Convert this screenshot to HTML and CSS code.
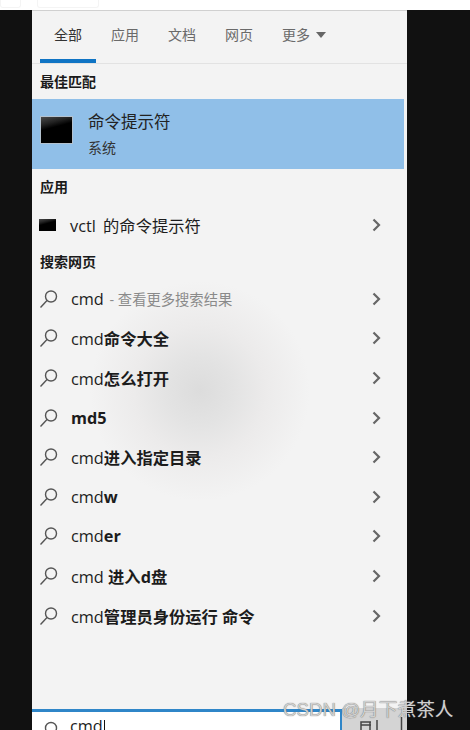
FILE: index.html
```html
<!DOCTYPE html>
<html lang="zh-CN">
  <head>
    <meta charset="UTF-8" />
    <title>cmd</title>
    <link rel="stylesheet" href="styles.css">
  </head>
  <body>
    <div class="topstrip">
      <div class="ghost ghost-a"></div>
      <div class="ghost ghost-b"></div>
    </div>
    <div class="panel">
      <div class="tabs">
        <span class="tab active">全部</span>
        <span class="tab">应用</span>
        <span class="tab">文档</span>
        <span class="tab">网页</span>
        <span class="tab">更多<i class="caret"></i></span>
      </div>

      <h2 class="label label-first">最佳匹配</h2>
      <div class="best">
        <div class="cmd-icon"></div>
        <div>
          <div class="best-title">命令提示符</div>
          <div class="best-sub">系统</div>
        </div>
      </div>

      <h2 class="label label-app">应用</h2>
      <div class="row row-app">
        <div class="cmd-icon small"></div>
        <span class="text">vctl 的命令提示符</span>
        <svg class="arrow" width="9" height="14" viewBox="0 0 9 14"><path d="M1.5 1.5 7 7l-5.500 5.500" /></svg>
      </div>

      <h2 class="label label-web">搜索网页</h2>
      <div class="results">
        <div class="row">
          <svg class="search" width="20" height="20" viewBox="0 0 20 20"><circle cx="12" cy="7.500" r="5.500" /><path d="M8 11.500 1.500 18.500" /></svg>
          <span class="text">cmd<span class="hint"> - 查看更多搜索结果</span></span>
          <svg class="arrow" width="9" height="14" viewBox="0 0 9 14"><path d="M1.5 1.5 7 7l-5.500 5.500" /></svg>
        </div>
        <div class="row">
          <svg class="search" width="20" height="20" viewBox="0 0 20 20"><circle cx="12" cy="7.500" r="5.500" /><path d="M8 11.500 1.500 18.500" /></svg>
          <span class="text">cmd<b>命令大全</b></span>
          <svg class="arrow" width="9" height="14" viewBox="0 0 9 14"><path d="M1.5 1.5 7 7l-5.500 5.500" /></svg>
        </div>
        <div class="row">
          <svg class="search" width="20" height="20" viewBox="0 0 20 20"><circle cx="12" cy="7.500" r="5.500" /><path d="M8 11.500 1.500 18.500" /></svg>
          <span class="text">cmd<b>怎么打开</b></span>
          <svg class="arrow" width="9" height="14" viewBox="0 0 9 14"><path d="M1.5 1.5 7 7l-5.500 5.500" /></svg>
        </div>
        <div class="row">
          <svg class="search" width="20" height="20" viewBox="0 0 20 20"><circle cx="12" cy="7.500" r="5.500" /><path d="M8 11.500 1.500 18.500" /></svg>
          <span class="text"><b>md5</b></span>
          <svg class="arrow" width="9" height="14" viewBox="0 0 9 14"><path d="M1.5 1.5 7 7l-5.500 5.500" /></svg>
        </div>
        <div class="row">
          <svg class="search" width="20" height="20" viewBox="0 0 20 20"><circle cx="12" cy="7.500" r="5.500" /><path d="M8 11.500 1.500 18.500" /></svg>
          <span class="text">cmd<b>进入指定目录</b></span>
          <svg class="arrow" width="9" height="14" viewBox="0 0 9 14"><path d="M1.5 1.5 7 7l-5.500 5.500" /></svg>
        </div>
        <div class="row">
          <svg class="search" width="20" height="20" viewBox="0 0 20 20"><circle cx="12" cy="7.500" r="5.500" /><path d="M8 11.500 1.500 18.500" /></svg>
          <span class="text">cmd<b>w</b></span>
          <svg class="arrow" width="9" height="14" viewBox="0 0 9 14"><path d="M1.5 1.5 7 7l-5.500 5.500" /></svg>
        </div>
        <div class="row">
          <svg class="search" width="20" height="20" viewBox="0 0 20 20"><circle cx="12" cy="7.500" r="5.500" /><path d="M8 11.500 1.500 18.500" /></svg>
          <span class="text">cmd<b>er</b></span>
          <svg class="arrow" width="9" height="14" viewBox="0 0 9 14"><path d="M1.5 1.5 7 7l-5.500 5.500" /></svg>
        </div>
        <div class="row">
          <svg class="search" width="20" height="20" viewBox="0 0 20 20"><circle cx="12" cy="7.500" r="5.500" /><path d="M8 11.500 1.500 18.500" /></svg>
          <span class="text">cmd <b>进入d盘</b></span>
          <svg class="arrow" width="9" height="14" viewBox="0 0 9 14"><path d="M1.5 1.5 7 7l-5.500 5.500" /></svg>
        </div>
        <div class="row">
          <svg class="search" width="20" height="20" viewBox="0 0 20 20"><circle cx="12" cy="7.500" r="5.500" /><path d="M8 11.500 1.500 18.500" /></svg>
          <span class="text">cmd<b>管理员身份运行 命令</b></span>
          <svg class="arrow" width="9" height="14" viewBox="0 0 9 14"><path d="M1.5 1.5 7 7l-5.500 5.500" /></svg>
        </div>
      </div>

      <div class="searchbar">
        <div class="input">
          <svg class="input-icon" width="14" height="14" viewBox="0 0 14 14"><circle cx="7" cy="7" r="5.500" /></svg>
          <span class="typed">cmd</span>
        </div>
        <div class="side">
          <svg width="65" height="22" viewBox="0 0 65 22"><path d="M19 22V14h10M19 17h10M28 14v8M35 12v10M59.500 9v13" /></svg>
        </div>
      </div>
    </div>
    <div class="watermark">CSDN @月下煮茶人</div>
  </body>
</html>
```

FILE: styles.css
```css
html,
body {
  margin: 0;
  height: 730px;
  overflow: hidden;
}
body {
  background: #111111;
  font-family: "Open Sans", "Noto Sans CJK SC", sans-serif;
  color: #1c1c1c;
}
.topstrip {
  height: 10px;
  background: #ffffff;
  display: flex;
  gap: 16px;
}
.ghost {
  height: 7px;
  border: 1px solid #f4f4f4;
  border-top: 0;
  border-radius: 0 0 3px 3px;
}
.ghost-a {
  width: 19px;
}
.ghost-b {
  width: 60px;
}
.panel {
  box-sizing: border-box;
  width: 375px;
  height: 720px;
  margin-left: 32px;
  border-top: 1px solid #d0d0d0;
  background: radial-gradient(circle 110px at 168px 380px, #dcdcdc 0, #e3e3e3 30%, #ecebeb 60%, #f3f3f3 100%) #f3f3f3;
  display: flex;
  flex-direction: column;
  overflow: hidden;
}

.tabs {
  display: flex;
  gap: 29px;
  height: 52px;
  padding-left: 22px;
  border-bottom: 1px solid #e2e2e2;
  flex-shrink: 0;
}
.tab {
  font-size: 14px;
  line-height: 47px;
  color: #6a6a6a;
  position: relative;
}
.tab.active {
  color: #333333;
}
.tab.active::after {
  content: "";
  position: absolute;
  left: -14px;
  right: -14px;
  bottom: 0;
  height: 4px;
  background: #0f74c4;
}
.caret {
  display: inline-block;
  margin-left: 6px;
  vertical-align: 2px;
  border-left: 5.500px solid transparent;
  border-right: 5.500px solid transparent;
  border-top: 6px solid #666666;
}

.label {
  margin: 0;
  padding-left: 8px;
  font-size: 14px;
  font-weight: 700;
  line-height: 20px;
  color: #1a1a1a;
}
.label-first {
  margin-top: 8px;
  margin-bottom: 7px;
}
.label-app {
  margin-top: 8px;
}
.label-web {
  margin-top: 8px;
  margin-bottom: 7px;
}

.best {
  height: 70px;
  width: 372px;
  background: #90bfe8;
  display: flex;
  align-items: center;
  gap: 15px;
  padding-left: 8px;
  box-sizing: border-box;
  flex-shrink: 0;
}
.cmd-icon {
  width: 33px;
  height: 28px;
  margin-bottom: 8px;
  border: 1px solid #b4c2cf;
  box-sizing: border-box;
  background: linear-gradient(165deg, #4a4a4a 0, #222222 24%, #000000 40%);
}
.cmd-icon.small {
  width: 17px;
  height: 12px;
  margin-bottom: 0;
  border: 0;
}
.best-title {
  font-size: 16.500px;
  line-height: 24px;
  color: #222222;
}
.best-sub {
  font-size: 14px;
  line-height: 20px;
  margin-top: 4px;
  color: #333333;
}

.row {
  height: 39.600px;
  display: flex;
  align-items: center;
  padding-left: 7px;
  width: 349px;
  box-sizing: border-box;
}
.row-app {
  height: 38px;
  margin-top: 9px;
}
.row-app .text {
  margin-left: 14px;
  word-spacing: 3px;
}
.text {
  font-size: 16.300px;
  margin-left: 12px;
  flex: 1;
  white-space: nowrap;
}
.text b {
  font-weight: 700;
}
.hint {
  font-size: 14.300px;
  margin-left: 2px;
  color: #8a8a8a;
}
.search {
  fill: none;
  stroke: #555555;
  stroke-width: 1.400;
}
.arrow {
  fill: none;
  stroke: #666666;
  stroke-width: 2.200;
}

.searchbar {
  margin-top: auto;
  height: 22px;
  display: flex;
  flex-shrink: 0;
}
.input {
  width: 296px;
  margin-top: 1px;
  background: #ffffff;
  border-top: 3px solid #2f86c8;
  border-right: 2px solid #2f86c8;
  display: flex;
  align-items: flex-start;
  padding-left: 12px;
  flex-shrink: 0;
  overflow: hidden;
}
.input-icon {
  fill: none;
  stroke: #555555;
  stroke-width: 1.400;
  margin-top: 9px;
  flex-shrink: 0;
}
.typed {
  margin-left: 12px;
  font-size: 16.300px;
  line-height: 28px;
}
.typed::after {
  content: "";
  display: inline-block;
  width: 1px;
  height: 12px;
  margin-left: 1px;
  background: #111111;
}
.side {
  flex: 1;
  background: #d4d4d4;
}
.side svg {
  display: block;
  fill: none;
  stroke: #444444;
  stroke-width: 1.500;
}

.watermark {
  position: absolute;
  left: 283px;
  top: 698px;
  font-family: "Liberation Sans", "Noto Sans CJK SC", sans-serif;
  font-size: 18.700px;
  line-height: 24px;
  color: #d0d0d0;
  text-shadow: 0 0 1px #555555;
  white-space: nowrap;
}
```
